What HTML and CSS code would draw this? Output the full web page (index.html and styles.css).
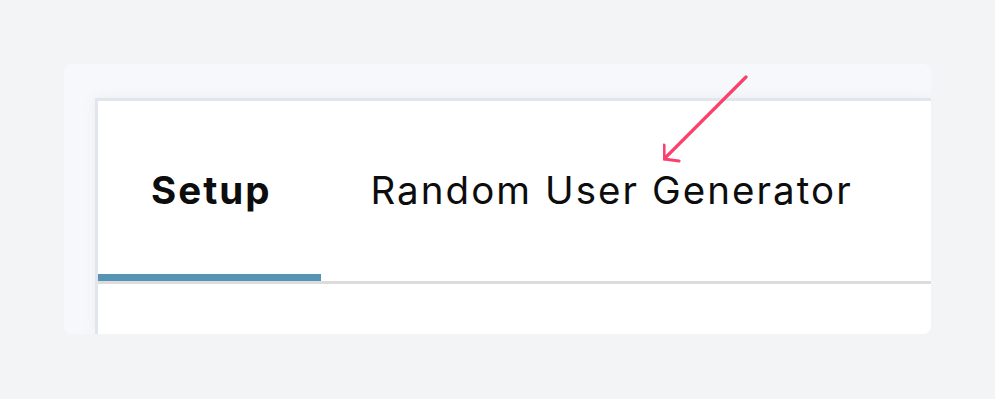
FILE: index.html
```html
<!DOCTYPE html>
<html lang="en">
<head>
    <meta charset="UTF-8">
    <title>Tabs</title>
    <link rel="stylesheet" href="styles.css">
</head>
<body>
    <div class="shot-card">
        <div class="shot-frame">
            <div class="tab-list">
                <div class="tab active">Setup</div>
                <div class="tab">Random User Generator</div>
            </div>
        </div>
        <svg class="pointer" width="100" height="100" viewBox="0 0 100 100">
            <path d="M83 13 L1 95 M1 95 L1 81 M1 95 L16 97" fill="none" stroke="#f9416b" stroke-width="3.2" stroke-linecap="round" stroke-linejoin="round"/>
        </svg>
    </div>
</body>
</html>
```

FILE: styles.css
```css
* {
    margin: 0;
    padding: 0;
    box-sizing: border-box;
}

body {
    background-color: #f3f4f6;
    padding: 64px;
    font-family: Inter, "Noto Sans", sans-serif;
}

.shot-card {
    position: relative;
    width: 867px;
    height: 270px;
    display: flex;
    padding: 34px 0 0 31px;
    background-color: #f7f8fb;
    border-radius: 8px;
    overflow: hidden;
}

.shot-frame {
    flex: 1;
    background-color: #fff;
    border-top: 3px solid #e1e6ee;
    border-left: 3px solid #e1e6ee;
    box-shadow: 0 0 12px rgba(100, 116, 139, 0.08);
}

.tab-list {
    display: flex;
    border-bottom: 3px solid #dcdcdc;
}

.tab {
    padding: 71px 48px 65px 49px;
    font-size: 38.5px;
    line-height: 37px;
    letter-spacing: 2.05px;
    color: #0d0d0d;
    border-bottom: 7px solid transparent;
}

.tab.active {
    font-weight: 700;
    padding-left: 53px;
    padding-right: 50px;
    letter-spacing: 2px;
    border-bottom-color: #5594b5;
}

.pointer {
    position: absolute;
    left: 599px;
    top: 0;
}
```
